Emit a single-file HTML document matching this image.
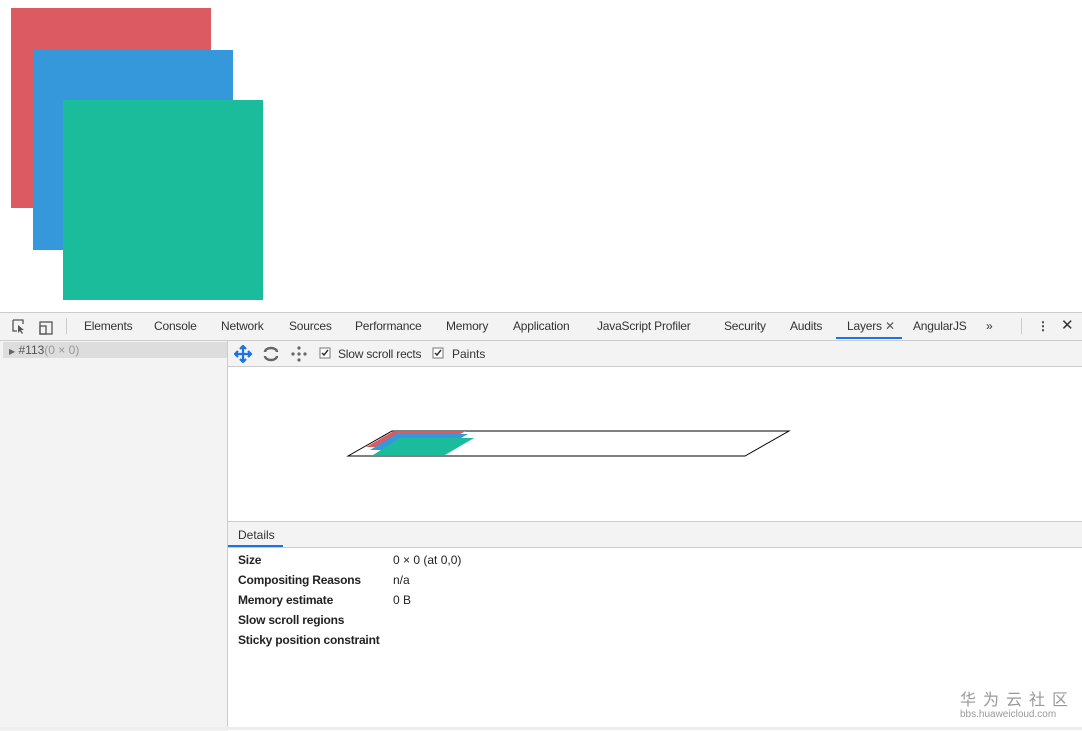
<!DOCTYPE html><html><head><style>
body{margin:0;width:1082px;height:730px;position:relative;overflow:hidden;font-family:"Liberation Sans",sans-serif;font-size:12px;color:#333;background:#fff}
.a{position:absolute}
.t{position:absolute;top:319px;color:#333;letter-spacing:-0.2px}
</style></head><body>
<div class="a" style="left:11px;top:8px;width:200px;height:200px;background:#dc5a62"></div>
<div class="a" style="left:33px;top:50px;width:200px;height:200px;background:#3498db"></div>
<div class="a" style="left:63px;top:100px;width:200px;height:200px;background:#1abc9c"></div>
<div class="a" style="left:0;top:312px;width:1082px;height:418px;background:#f3f3f3;border-top:1px solid #ccc"></div>
<div class="a" style="left:0;top:340px;width:1082px;height:1px;background:#ccc"></div>
<svg class="a" style="left:10px;top:318px" width="50" height="18"><path d="M3 2h10v4M3 2v11h4" fill="none" stroke="#555" stroke-width="1.3"/><path d="M8 7l6 5-3 0 2 3-1 1-2-3-2 2z" fill="#555"/><rect x="30" y="4" width="12" height="12" fill="none" stroke="#555" stroke-width="1.3"/><rect x="30" y="8" width="6" height="8" fill="none" stroke="#555" stroke-width="1.3"/></svg>
<div class="a" style="left:66px;top:318px;width:1px;height:16px;background:#ccc"></div>
<span class="t" style="left:84px">Elements</span><span class="t" style="left:154px">Console</span><span class="t" style="left:221px">Network</span><span class="t" style="left:289px">Sources</span><span class="t" style="left:355px">Performance</span><span class="t" style="left:446px">Memory</span><span class="t" style="left:513px">Application</span><span class="t" style="left:597px">JavaScript Profiler</span><span class="t" style="left:724px">Security</span><span class="t" style="left:790px">Audits</span><span class="t" style="left:847px">Layers <span style="color:#555">✕</span></span><span class="t" style="left:913px">AngularJS</span><span class="t" style="left:986px">»</span>
<div class="a" style="left:836px;top:337px;width:66px;height:2px;background:#1a73e8"></div>
<div class="a" style="left:1021px;top:318px;width:1px;height:16px;background:#ccc"></div>
<span class="t" style="left:1037px;font-weight:bold">⋮</span><span class="t" style="left:1061px;font-size:15px;top:316px">✕</span>
<div class="a" style="left:227px;top:341px;width:1px;height:389px;background:#ccc"></div>
<div class="a" style="left:3px;top:342px;width:224px;height:16px;background:#ddd;color:#555;line-height:16px;font-size:12px"><span style="font-size:8px;color:#666;margin-left:6px">▶</span> #113<span style="color:#999">(0 × 0)</span></div>
<div class="a" style="left:228px;top:366px;width:854px;height:154px;background:#fff;border-top:1px solid #ccc;border-bottom:1px solid #ccc"></div>
<svg class="a" style="left:234px;top:345px" width="260" height="18"><path d="M9 1v16M1 9h16M6 4l3-3 3 3M6 14l3 3 3-3M4 6l-3 3 3 3M14 6l3 3-3 3" stroke="#1a73e8" stroke-width="2.2" fill="none"/><path d="M31 7a6 4 0 0 1 12 0M43 11a6 4 0 0 1-12 0" stroke="#666" stroke-width="2.4" fill="none"/><g fill="#666"><circle cx="65" cy="3" r="1.6"/><circle cx="65" cy="15" r="1.6"/><circle cx="59" cy="9" r="1.6"/><circle cx="71" cy="9" r="1.6"/><circle cx="65" cy="9" r="1.6"/></g><rect x="86" y="3" width="10" height="10" fill="#fff" stroke="#777"/><path d="M88 8l2 2 4-5" stroke="#333" stroke-width="1.5" fill="none"/><rect x="199" y="3" width="10" height="10" fill="#fff" stroke="#777"/><path d="M201 8l2 2 4-5" stroke="#333" stroke-width="1.5" fill="none"/></svg>
<span class="a" style="left:338px;top:347px;letter-spacing:-0.2px">Slow scroll rects</span><span class="a" style="left:452px;top:347px">Paints</span>
<svg class="a" style="left:0;top:0" width="1082" height="730"><polygon points="348,456 392,431 789,431 745,456" fill="#fff" stroke="#000" stroke-width="1"/><polygon points="366,447 394,431 466,431 436,447" fill="#dc5a62"/><polygon points="370,450 396,434 468,434 440,450" fill="#3498db"/><polygon points="373,455 400,438 474,438 445,455" fill="#1abc9c"/></svg>
<div class="a" style="left:228px;top:547px;width:854px;height:183px;background:#fff;border-top:1px solid #ccc"></div>
<span class="a" style="left:238px;top:528px">Details</span>
<div class="a" style="left:228px;top:545px;width:55px;height:2px;background:#1a73e8"></div>
<div class="a" style="left:238px;top:550px;font-weight:bold;line-height:20px;color:#222;letter-spacing:-0.2px">Size<br>Compositing Reasons<br>Memory estimate<br>Slow scroll regions<br>Sticky position constraint</div>
<div class="a" style="left:393px;top:550px;line-height:20px;color:#222">0 × 0 (at 0,0)<br>n/a<br>0 B</div>
<div class="a" style="left:960px;top:688px;font-family:'Noto Sans CJK SC',sans-serif;font-size:16px;line-height:20px;letter-spacing:7px;color:#999">华为云社区</div>
<div class="a" style="left:960px;top:709px;font-size:10px;color:#999">bbs.huaweicloud.com</div>
<div class="a" style="left:0;top:727px;width:1082px;height:3px;background:#eee"></div>
</body></html>
